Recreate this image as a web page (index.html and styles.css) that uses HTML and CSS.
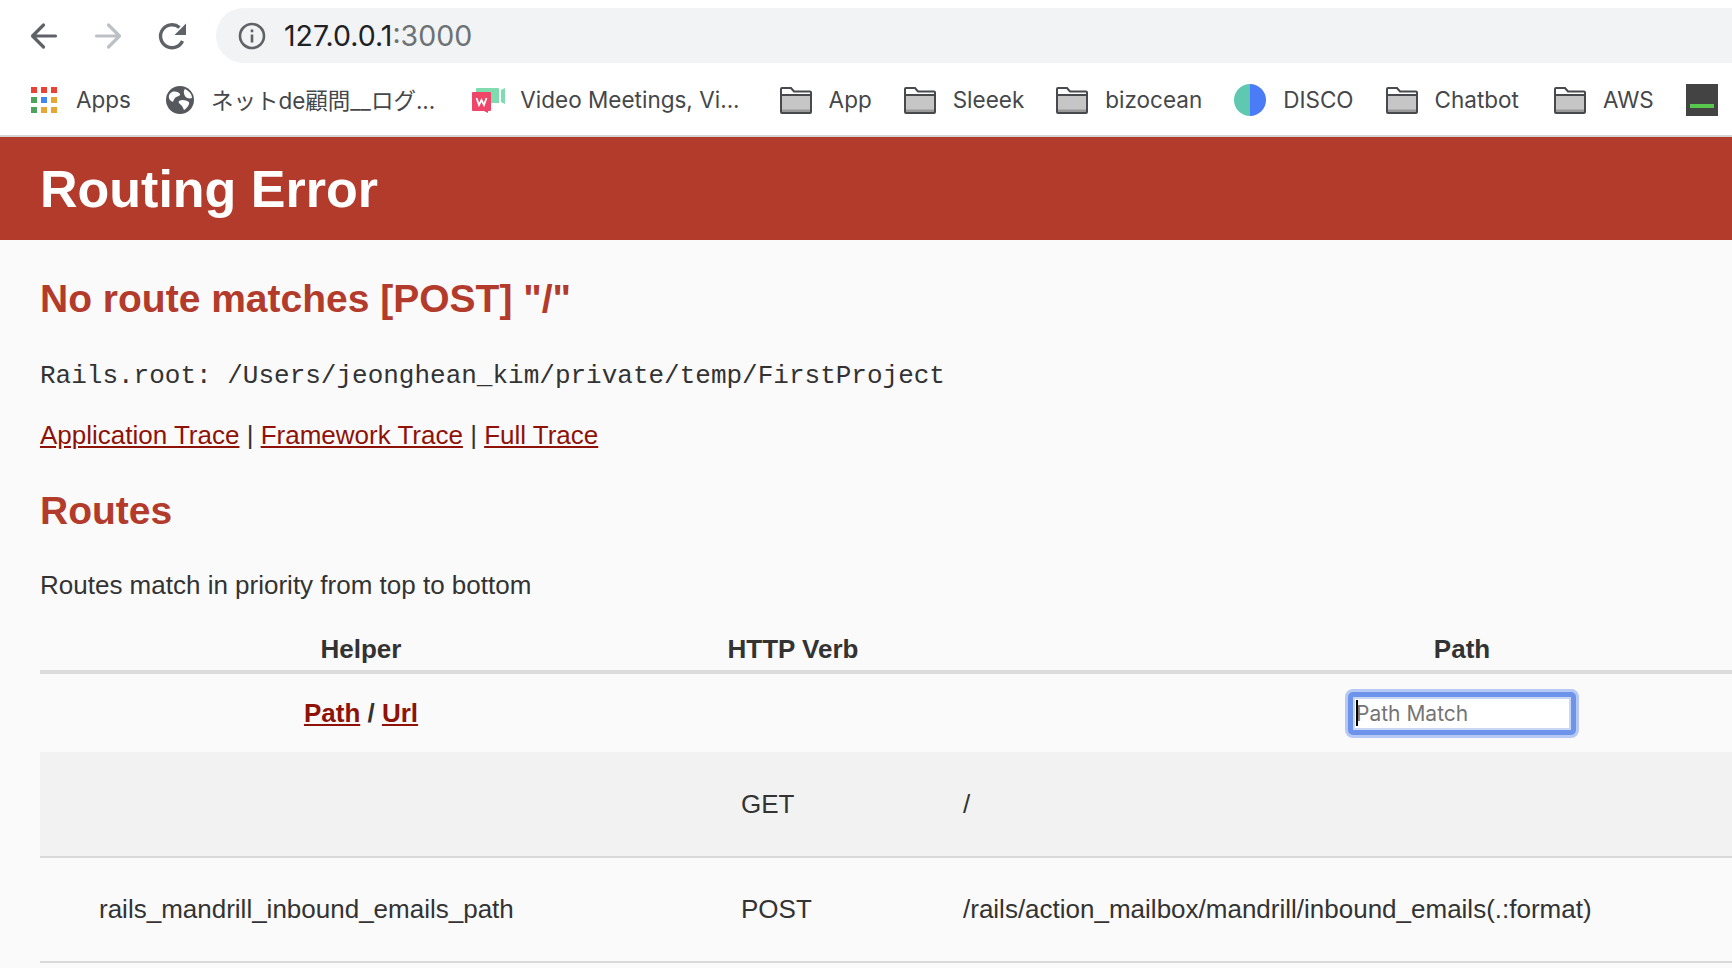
FILE: index.html
```html
<!DOCTYPE html>
<html lang="en">
<head>
  <meta charset="UTF-8">
  <title>Routing Error</title>
  <link rel="stylesheet" href="styles.css">
</head>
<body>
  <div class="browser-toolbar">
    <svg class="nav-icon" viewBox="0 0 32 32"><path d="M27.500 16H5M15.500 5 4.500 16l11 11" fill="none" stroke="#5f6368" stroke-width="3.200" stroke-linecap="round" stroke-linejoin="round"/></svg>
    <svg class="nav-icon" viewBox="0 0 32 32"><path d="M4.500 16H27M16.500 5l11 11-11 11" fill="none" stroke="#bdc1c6" stroke-width="3.200" stroke-linecap="round" stroke-linejoin="round"/></svg>
    <svg class="nav-icon" viewBox="0 0 32 32"><path d="M26.500 21A11.500 11.500 0 1 1 23.500 7.500" fill="none" stroke="#5f6368" stroke-width="3.400"/><path d="M30 3.500V15H18.500z" fill="#5f6368"/></svg>
    <div class="address-bar">
      <svg class="info-icon" viewBox="0 0 28 28"><circle cx="14" cy="14" r="12" fill="none" stroke="#5f6368" stroke-width="2.600"/><path d="M12.700 12.500h2.600v8h-2.600zM12.700 7.500h2.600v2.800h-2.600z" fill="#5f6368"/></svg>
      <span class="address-host">127.0.0.1</span><span class="address-port">:3000</span>
    </div>
  </div>

  <div class="bookmarks-bar">
    <a class="bookmark bookmark-apps">
      <svg class="bm-icon-apps" viewBox="0 0 26 26">
        <rect x="0" y="0" width="6" height="6" fill="#ea4335"/><rect x="10" y="0" width="6" height="6" fill="#ea4335"/><rect x="20" y="0" width="6" height="6" fill="#ea4335"/>
        <rect x="0" y="10" width="6" height="6" fill="#4fa35f"/><rect x="10" y="10" width="6" height="6" fill="#4285f4"/><rect x="20" y="10" width="6" height="6" fill="#e8a634"/>
        <rect x="0" y="20" width="6" height="6" fill="#4fa35f"/><rect x="10" y="20" width="6" height="6" fill="#e8a634"/><rect x="20" y="20" width="6" height="6" fill="#e8a634"/>
      </svg>
      <span class="bm-label">Apps</span>
    </a>
    <a class="bookmark bookmark-globe">
      <svg class="bm-icon-globe" viewBox="0 0 28 28"><circle cx="14" cy="14" r="14" fill="#55585d"/><path d="M6 6c3-1 7 0 8 2s-3 2-5 4-1 5-4 3-3-7 1-9zM19 3c4 2 7 5 7 9-3 1-6 0-7-2s-2-5 0-7zM13 15c3-2 7-1 10 1 1 3-3 7-5 8-1-2-1-3-3-5s-3-2-2-4z" fill="#fff"/></svg>
      <span class="bm-label jp-label">ネットde顧問__ログ...</span>
    </a>
    <a class="bookmark bookmark-video">
      <svg class="bm-icon-video" viewBox="0 -4 33 33"><path d="M4 1a1 1 0 0 1 1-1h21a1 1 0 0 1 1 1v14H4z" fill="#7fdcae"/><path d="M29 2l4-2v16l-4-2z" fill="#7fdcae"/><path d="M1 4h17a1 1 0 0 1 1 1v17a1 1 0 0 1-1 1h-2v2l-4-2H1a1 1 0 0 1-1-1V5a1 1 0 0 1 1-1z" fill="#ef4569"/><path d="M4.500 10l2.500 7 2.500-5 2.500 5 2.500-7" fill="none" stroke="#fff" stroke-width="1.800"/></svg>
      <span class="bm-label">Video Meetings, Vi...</span>
    </a>
    <a class="bookmark">
      <svg class="bm-icon" viewBox="0 0 32 28"><use href="#folder"/></svg>
      <span class="bm-label">App</span>
    </a>
    <a class="bookmark">
      <svg class="bm-icon" viewBox="0 0 32 28"><use href="#folder"/></svg>
      <span class="bm-label">Sleeek</span>
    </a>
    <a class="bookmark">
      <svg class="bm-icon" viewBox="0 0 32 28"><use href="#folder"/></svg>
      <span class="bm-label">bizocean</span>
    </a>
    <a class="bookmark">
      <svg class="bm-icon" viewBox="0 0 32 32"><path d="M16 0a16 16 0 0 0 0 32z" fill="#5ec9b0"/><path d="M16 0a16 16 0 0 1 0 32z" fill="#4a7cf7"/></svg>
      <span class="bm-label">DISCO</span>
    </a>
    <a class="bookmark bookmark-chatbot">
      <svg class="bm-icon" viewBox="0 0 32 28"><use href="#folder"/></svg>
      <span class="bm-label">Chatbot</span>
    </a>
    <a class="bookmark">
      <svg class="bm-icon" viewBox="0 0 32 28"><use href="#folder"/></svg>
      <span class="bm-label">AWS</span>
    </a>
    <div class="terminal-icon"><span class="terminal-line"></span></div>
  </div>

  <svg class="svg-defs" width="0" height="0">
    <symbol id="folder" viewBox="0 0 32 28">
      <path d="M1 2.500h10l3 3h17v21H1z" fill="#fff"/>
      <path d="M2 9h28v17H2z" fill="#c6c6c6"/>
      <path d="M2 23.500h28V26H2z" fill="#999"/>
      <path d="M1 26V3a1 1 0 0 1 1-1h9l3 3.500h16a1 1 0 0 1 1 1V26a1 1 0 0 1-1 1H2a1 1 0 0 1-1-1zM1 9h30" fill="none" stroke="#47494d" stroke-width="2"/>
    </symbol>
  </svg>

  <header class="error-header">
    <h1>Routing Error</h1>
  </header>

  <main class="error-main">
    <h2>No route matches [POST] "/"</h2>
    <p class="rails-root">Rails.root: /Users/jeonghean_kim/private/temp/FirstProject</p>
    <p class="trace-links">
      <a href="#">Application Trace</a> | <a href="#">Framework Trace</a> | <a href="#">Full Trace</a>
    </p>
    <h2 class="routes-title">Routes</h2>
    <p class="routes-note">Routes match in priority from top to bottom</p>

    <div class="table-clip">
      <table class="route-table">
        <colgroup>
          <col class="col-helper">
          <col class="col-verb">
          <col class="col-path">
        </colgroup>
        <thead>
          <tr>
            <th>Helper</th>
            <th>HTTP Verb</th>
            <th>Path</th>
          </tr>
          <tr class="filter-row">
            <th><a href="#">Path</a> / <a href="#">Url</a></th>
            <th></th>
            <th>
              <span class="search-wrap">
                <input class="path-search" type="text" placeholder="Path Match">
                <span class="search-caret"></span>
              </span>
            </th>
          </tr>
        </thead>
        <tbody>
          <tr class="row-shaded">
            <td></td>
            <td>GET</td>
            <td>/</td>
          </tr>
          <tr>
            <td>rails_mandrill_inbound_emails_path</td>
            <td>POST</td>
            <td>/rails/action_mailbox/mandrill/inbound_emails(.:format)</td>
          </tr>
        </tbody>
      </table>
    </div>
  </main>
</body>
</html>
```

FILE: styles.css
```css
* {
  box-sizing: border-box;
}

html, body {
  height: 968px;
  overflow: hidden;
}

body {
  margin: 0;
  background: #fafafa;
  color: #333;
  font-family: "Liberation Sans", Arial, sans-serif;
  font-size: 26px;
}

/* browser chrome */
.browser-toolbar {
  height: 73px;
  background: #fff;
  display: flex;
  align-items: center;
  padding: 0 0 2px 28px;
  font-family: Inter, Roboto, sans-serif;
  overflow: hidden;
}

.nav-icon {
  width: 32px;
  height: 32px;
  margin-right: 32px;
  flex: none;
}

.address-bar {
  flex: 1;
  height: 55px;
  margin-left: -4px;
  margin-right: -40px;
  background: #f1f3f4;
  border-radius: 28px;
  display: flex;
  align-items: center;
  padding-left: 22px;
  font-size: 28.500px;
}

.info-icon {
  width: 28px;
  height: 28px;
  margin-right: 18px;
}

.address-host {
  color: #202124;
}

.address-port {
  color: #6d7175;
}

.bookmarks-bar {
  height: 64px;
  background: #fff;
  border-bottom: 2px solid #d5d5d5;
  display: flex;
  align-items: center;
  padding: 0 0 8px 31px;
  gap: 32px;
  font-family: Inter, Roboto, sans-serif;
  font-size: 22.500px;
  color: #45474a;
  white-space: nowrap;
  overflow: hidden;
}

.bookmark {
  display: flex;
  align-items: center;
  gap: 17px;
  flex: none;
}

.bm-label {
  margin-top: -2px;
}

.bookmark-apps {
  margin-right: 3px;
  gap: 19px;
}

.bookmark-globe {
  margin-right: 5px;
  gap: 17px;
}

.bookmark-video {
  margin-right: 8px;
  gap: 15px;
}

.bookmark-chatbot {
  margin-right: 3px;
}

.bm-icon {
  width: 32px;
  height: 32px;
  flex: none;
}

.bm-icon-apps {
  width: 26px;
  height: 26px;
  flex: none;
}

.bm-icon-globe {
  width: 28px;
  height: 28px;
  flex: none;
}

.bm-icon-video {
  width: 33px;
  height: 33px;
  flex: none;
}

.jp-label {
  font-family: Inter, "Noto Sans CJK JP", sans-serif;
}

.terminal-icon {
  width: 32px;
  height: 32px;
  background: #434343;
  display: flex;
  align-items: flex-end;
  justify-content: center;
  padding-bottom: 8px;
  flex: none;
}

.terminal-line {
  width: 24px;
  height: 4px;
  background: #57c84d;
}

.svg-defs {
  display: block;
  height: 0;
}

/* rails error page */
.error-header {
  height: 103px;
  background: #b33b2c;
  color: #fff;
  padding: 1px 40px 0;
  display: flex;
  align-items: center;
}

.error-header h1 {
  margin: 0;
  font-size: 52px;
  font-weight: bold;
}

.error-main {
  padding: 36px 0 0 40px;
}

h2 {
  margin: 0;
  color: #b33b2c;
  font-size: 39px;
  line-height: 46px;
}

.rails-root {
  margin: 38px 0 0;
  font-family: "Liberation Mono", "Courier New", monospace;
  font-size: 26px;
  line-height: 32px;
}

.trace-links {
  margin: 27px 0 0;
  line-height: 32px;
}

.trace-links a,
.filter-row a {
  color: #8f1208;
}

.routes-title {
  margin-top: 37px;
}

.routes-note {
  margin: 35px 0 0;
  line-height: 32px;
}

.table-clip {
  margin-top: 27px;
  overflow: hidden;
}

.route-table {
  width: 1980px;
  table-layout: fixed;
  border-collapse: collapse;
}

.col-helper {
  width: 642px;
}

.col-verb {
  width: 222px;
}

.route-table th {
  height: 44px;
  padding: 0;
  text-align: center;
  font-weight: bold;
}

.route-table thead tr:first-child th {
  border-bottom: 4px solid #dcdcdc;
}

.filter-row th {
  height: 80px;
}

.search-wrap {
  position: relative;
  display: inline-block;
  vertical-align: middle;
}

.path-search {
  display: block;
  width: 228px;
  height: 43px;
  padding: 0 3px;
  margin: 0;
  border: 5px solid #6d94ea;
  border-radius: 5px;
  box-shadow: 0 0 0 3px #b6c9f5, inset 0 0 0 2px #c9d7f7;
  outline: none;
  background: #fff;
  font-family: Inter, Roboto, sans-serif;
  font-size: 21px;
}

.path-search::placeholder {
  color: #757575;
  opacity: 1;
}

.search-caret {
  position: absolute;
  left: 8px;
  top: 8px;
  width: 2px;
  height: 26px;
  background: #000;
}

.route-table td {
  height: 105px;
  padding: 0 0 0 59px;
  border-bottom: 2px solid #d9d9d9;
}

.row-shaded td {
  background: #f2f2f2;
}
```
